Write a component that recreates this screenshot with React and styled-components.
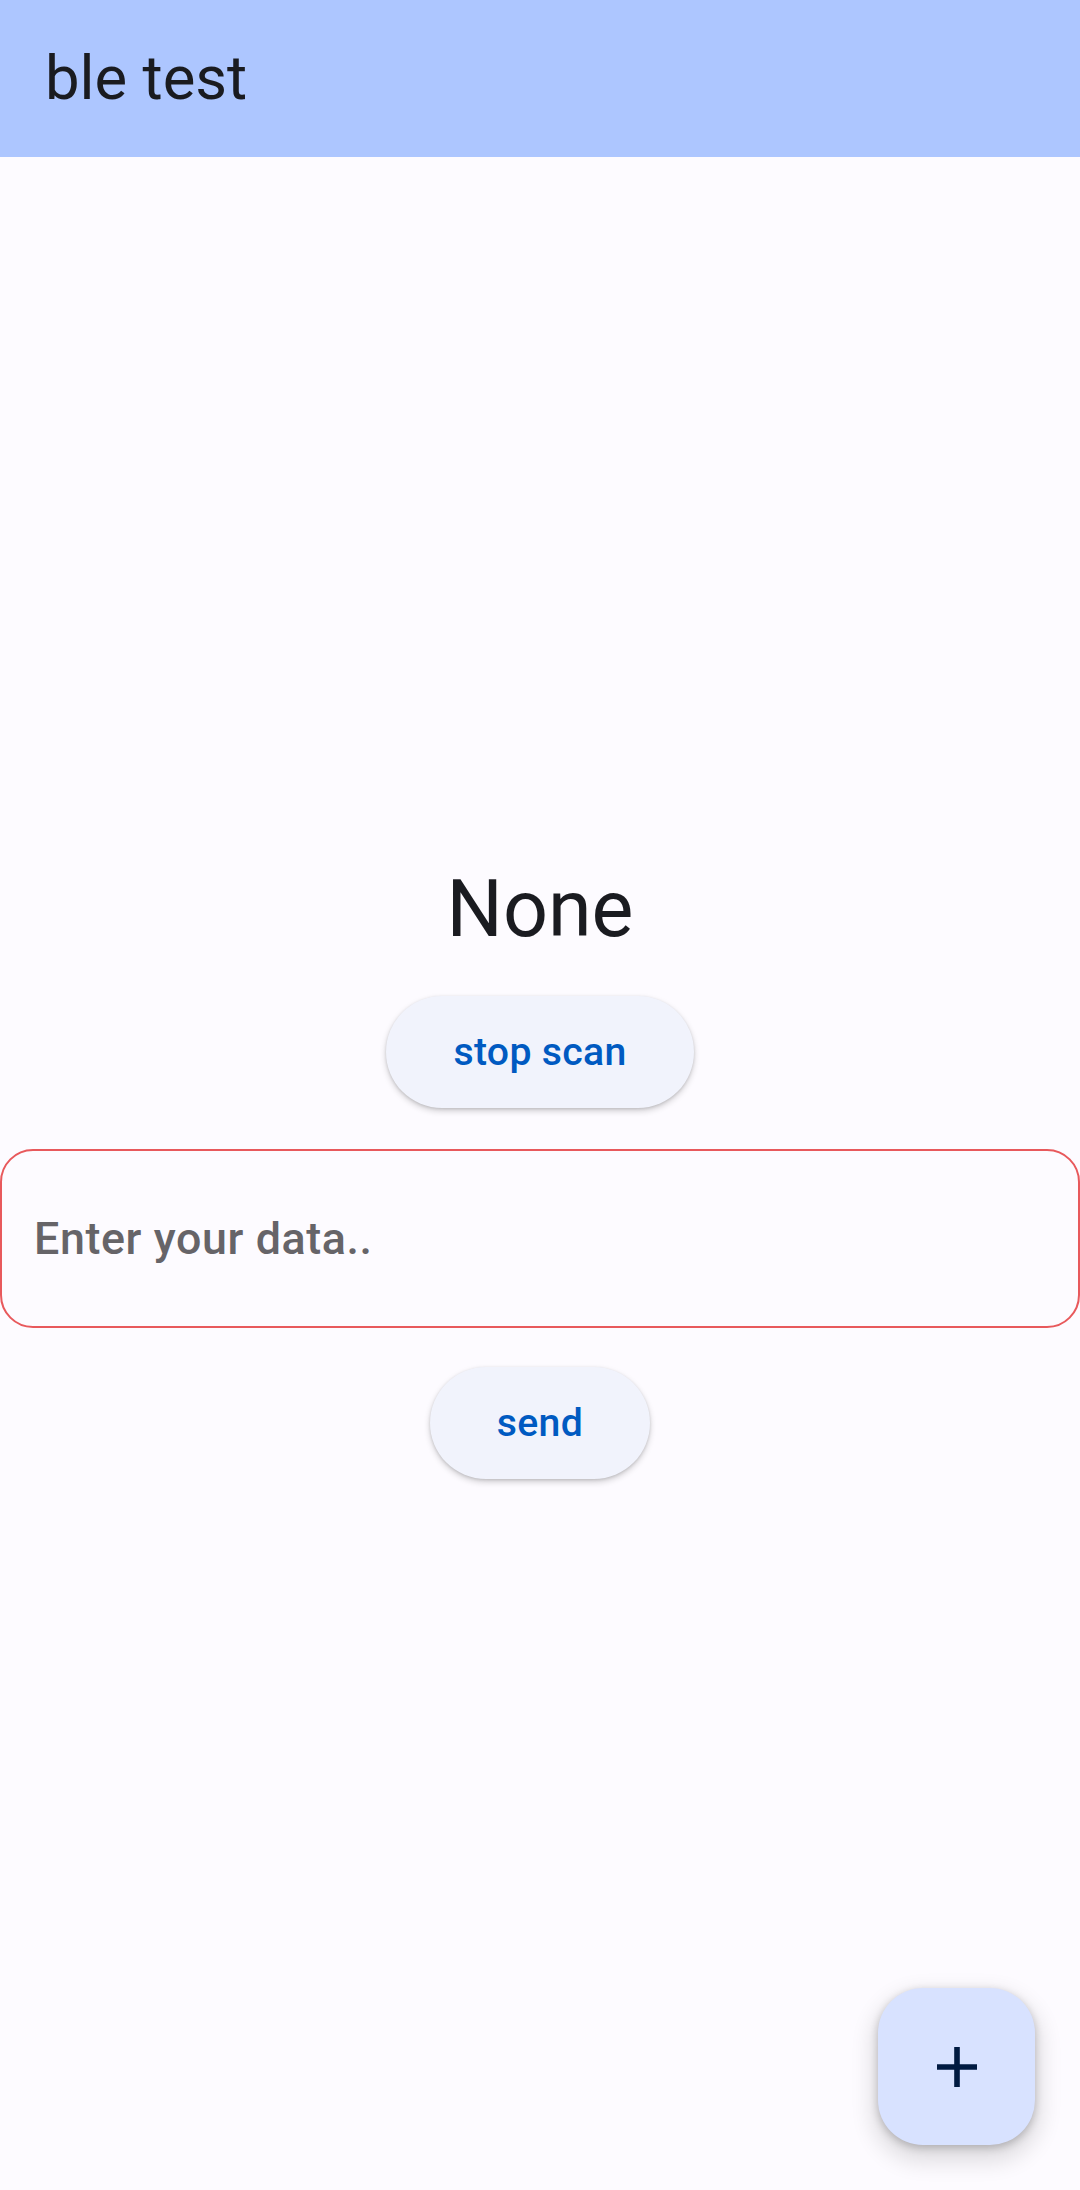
import React from "react";
import styled, { createGlobalStyle } from "styled-components";

const Global = createGlobalStyle`
  html, body { margin: 0; padding: 0; }
  body {
    background: #fdfbff;
    font-family: Roboto, "Noto Sans", "Liberation Sans", sans-serif;
  }
  * { box-sizing: border-box; }
`;

const Screen = styled.div`
  position: relative;
  width: 1080px;
  height: 2190px;
  display: flex;
  flex-direction: column;
  background: #fdfbff;
  overflow: hidden;
`;

const AppBar = styled.header`
  height: 157px;
  flex: none;
  display: flex;
  align-items: center;
  padding-left: 45px;
  background: #adc6ff;
`;

const Title = styled.h1`
  margin: 0;
  font-size: 61.6px;
  font-weight: 400;
  line-height: 1;
  color: #1a1b20;
  padding-top: 0px;
`;

const Body = styled.main`
  flex: 1;
  display: flex;
  flex-direction: column;
  align-items: center;
  justify-content: center;
  padding-bottom: 10px;
`;

const Status = styled.div`
  font-size: 79px;
  font-weight: 400;
  line-height: 101px;
  color: #1a1b20;
`;

const PillButton = styled.button`
  height: 112px;
  margin-top: ${(p) => p.$gap}px;
  padding: 0 67px;
  border: none;
  border-radius: 56px;
  background: #f1f3fc;
  color: #005ac1;
  font-family: inherit;
  font-size: 39.2px;
  font-weight: 500;
  letter-spacing: 0.3px;
  box-shadow: 0 3px 6px rgba(0, 0, 0, 0.18), 0 1px 3px rgba(0, 0, 0, 0.12);
  cursor: pointer;
`;

const Field = styled.div`
  width: 1080px;
  height: 179px;
  margin-top: 41px;
  border: 2.8px solid #e8595c;
  border-radius: 33px;
  display: flex;
  align-items: center;
  padding: 0 32px;
`;

const Input = styled.input`
  width: 100%;
  border: none;
  outline: none;
  background: transparent;
  font-family: inherit;
  font-size: 44.8px;
  font-weight: 500;
  letter-spacing: 0.6px;
  color: #1a1b20;
  padding: 0;
  &::placeholder {
    color: #666468;
  }
`;

const Fab = styled.button`
  position: absolute;
  right: 45px;
  bottom: 45px;
  width: 157px;
  height: 157px;
  border: none;
  border-radius: 45px;
  background: #d8e2ff;
  display: flex;
  align-items: center;
  justify-content: center;
  box-shadow: 0 11px 22px 6px rgba(0, 0, 0, 0.12), 0 3px 8px rgba(0, 0, 0, 0.22);
  cursor: pointer;
`;

const PlusIcon = () => (
  <svg width="40" height="40" viewBox="0 0 40 40" aria-hidden="true">
    <path d="M20 0v40M0 20h40" stroke="#001a41" strokeWidth="5.6" fill="none" />
  </svg>
);

export default function App() {
  return (
    <>
      <Global />
      <Screen>
        <AppBar>
          <Title>ble test</Title>
        </AppBar>
        <Body>
          <Status>None</Status>
          <PillButton $gap={36}>stop scan</PillButton>
          <Field>
            <Input placeholder="Enter your data.." />
          </Field>
          <PillButton $gap={39}>send</PillButton>
        </Body>
        <Fab aria-label="add">
          <PlusIcon />
        </Fab>
      </Screen>
    </>
  );
}
